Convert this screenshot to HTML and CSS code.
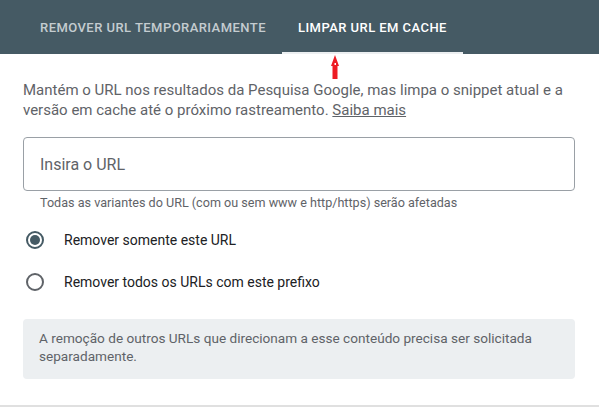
FILE: index.html
```html
<!DOCTYPE html>
<html lang="pt-BR">
    <head>
        <meta charset="UTF-8">
        <meta name="viewport" content="width=device-width, initial-scale=1.0">
        <title>Remover URLs</title>
        <link rel="stylesheet" href="styles.css">
    </head>
    <body>
        <div class="tabs">
            <div class="tab">REMOVER URL TEMPORARIAMENTE</div>
            <div class="tab active">LIMPAR URL EM CACHE</div>
        </div>

        <svg class="arrow" width="10" height="25" viewBox="0 0 10 25">
            <polygon points="5,0 9,11 7.5,11 7.5,24 2.5,24 2.5,11 1,11" fill="#ed1c24"/>
            <rect x="4.5" y="8" width="1.5" height="2" fill="#ffffff"/>
        </svg>

        <div class="content">
            <p class="intro">Mantém o URL nos resultados da Pesquisa Google, mas limpa o snippet atual e a versão em cache até o próximo rastreamento. <a href="#">Saiba mais</a></p>

            <div class="field">Insira o URL</div>
            <div class="hint">Todas as variantes do URL (com ou sem www e http/https) serão afetadas</div>

            <div class="radios">
                <div class="radio-row">
                    <svg class="radio" width="20" height="20" viewBox="0 0 20 20">
                        <circle cx="10" cy="10" r="8" fill="none" stroke="#455a64" stroke-width="2"/>
                        <circle cx="10" cy="10" r="5" fill="#455a64"/>
                    </svg>
                    <span>Remover somente este URL</span>
                </div>
                <div class="radio-row">
                    <svg class="radio" width="20" height="20" viewBox="0 0 20 20">
                        <circle cx="10" cy="10" r="8" fill="none" stroke="#5f6368" stroke-width="2"/>
                    </svg>
                    <span>Remover todos os URLs com este prefixo</span>
                </div>
            </div>

            <div class="note">A remoção de outros URLs que direcionam a esse conteúdo precisa ser solicitada separadamente.</div>
        </div>
        <div class="bottom-line"></div>
    </body>
</html>
```

FILE: styles.css
```css
body {
    margin: 0;
    font-family: Roboto, "Liberation Sans", sans-serif;
    background-color: #ffffff;
    color: #202124;
    position: relative;
}
.tabs {
    display: flex;
    height: 54px;
    padding-left: 24px;
    background-color: #455a64;
}
.tab {
    display: flex;
    align-items: center;
    padding: 2px 16px 0;
    font-size: 13px;
    font-weight: 500;
    letter-spacing: 0.45px;
    color: #c4ccd0;
    border-bottom: 2px solid transparent;
}
.tab.active {
    color: #ffffff;
    border-bottom-color: #eceff1;
}
.arrow {
    position: absolute;
    left: 330px;
    top: 55px;
}
.content {
    padding: 26px 24px 26px 23px;
}
.intro {
    margin: 0;
    font-size: 15px;
    line-height: 20px;
    color: #5f6368;
}
.intro a {
    color: #5f6368;
}
.field {
    margin-top: 17px;
    height: 52px;
    border: 1px solid #9aa0a6;
    border-radius: 4px;
    padding-left: 16px;
    display: flex;
    align-items: center;
    font-size: 16px;
    color: #5f6368;
}
.hint {
    margin-top: 4px;
    padding-left: 17px;
    font-size: 12.6px;
    line-height: 16px;
    color: #5f6368;
}
.radios {
    margin-top: 8px;
}
.radio-row {
    display: flex;
    align-items: center;
    height: 42px;
    font-size: 14px;
}
.radio {
    margin-left: 2px;
    margin-right: 19px;
}
.note {
    margin-top: 16px;
    padding: 10px 16px 14px;
    border-radius: 4px;
    background-color: #eceff1;
    font-size: 13.6px;
    line-height: 18px;
    color: #5f6368;
}
.bottom-line {
    height: 3px;
    background-color: #e0e0e0;
}
```
